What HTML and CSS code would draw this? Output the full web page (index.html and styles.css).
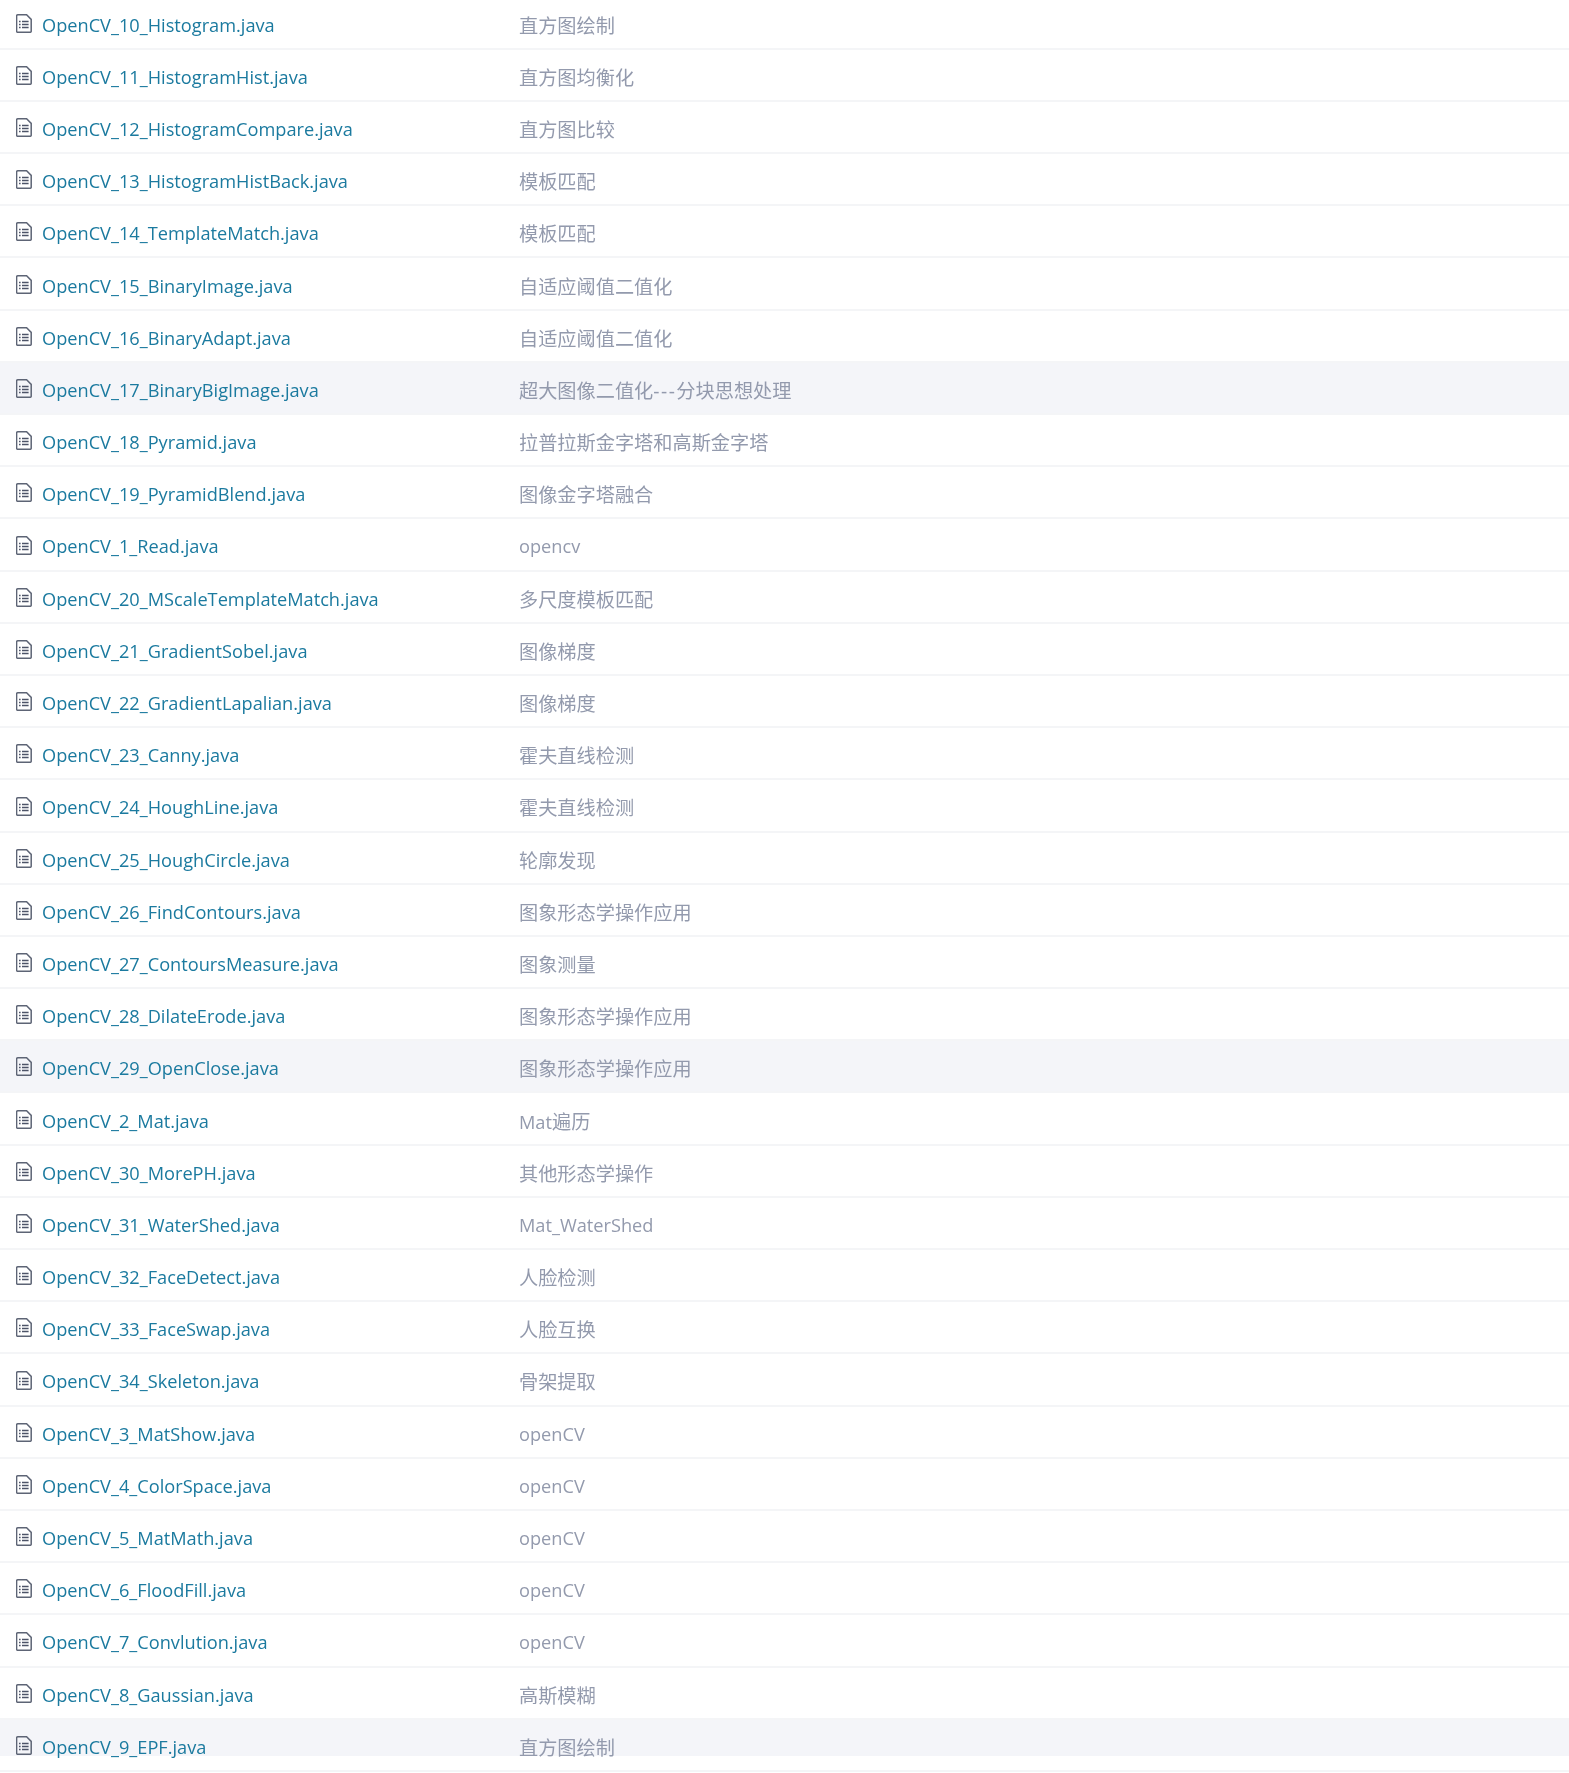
FILE: index.html
```html
<!DOCTYPE html>
<html lang="zh">
<head>
<meta charset="utf-8">
<title>OpenCV files</title>
<link rel="stylesheet" href="styles.css">
</head>
<body>
<svg class="defs" width="0" height="0" aria-hidden="true"><symbol id="file" viewBox="0 0 16 19"><path class="doc" d="M1.7 .8H10.6L15.2 5.4V17.2A1.1 1.1 0 0 1 14.1 18.3H1.7A1.1 1.1 0 0 1 .6 17.2V1.9A1.1 1.1 0 0 1 1.7 .8Z"/><path class="lines" d="M6 7.5H12.6M6 10.5H12.6M6 13.5H12.6M3 7.5H4.6M3 10.5H4.6M3 13.5H4.6"/></symbol></svg>
<main class="list">
<div class="row"><span class="name"><svg class="icon"><use href="#file"/></svg><a href="#">OpenCV_10_Histogram.java</a></span><span class="desc zh">直方图绘制</span></div>
<div class="row"><span class="name"><svg class="icon"><use href="#file"/></svg><a href="#">OpenCV_11_HistogramHist.java</a></span><span class="desc zh">直方图均衡化</span></div>
<div class="row"><span class="name"><svg class="icon"><use href="#file"/></svg><a href="#">OpenCV_12_HistogramCompare.java</a></span><span class="desc zh">直方图比较</span></div>
<div class="row"><span class="name"><svg class="icon"><use href="#file"/></svg><a href="#">OpenCV_13_HistogramHistBack.java</a></span><span class="desc zh">模板匹配</span></div>
<div class="row"><span class="name"><svg class="icon"><use href="#file"/></svg><a href="#">OpenCV_14_TemplateMatch.java</a></span><span class="desc zh">模板匹配</span></div>
<div class="row"><span class="name"><svg class="icon"><use href="#file"/></svg><a href="#">OpenCV_15_BinaryImage.java</a></span><span class="desc zh">自适应阈值二值化</span></div>
<div class="row"><span class="name"><svg class="icon"><use href="#file"/></svg><a href="#">OpenCV_16_BinaryAdapt.java</a></span><span class="desc zh">自适应阈值二值化</span></div>
<div class="row hover"><span class="name"><svg class="icon"><use href="#file"/></svg><a href="#">OpenCV_17_BinaryBigImage.java</a></span><span class="desc zh">超大图像二值化<span class="dash">---</span>分块思想处理</span></div>
<div class="row"><span class="name"><svg class="icon"><use href="#file"/></svg><a href="#">OpenCV_18_Pyramid.java</a></span><span class="desc zh">拉普拉斯金字塔和高斯金字塔</span></div>
<div class="row"><span class="name"><svg class="icon"><use href="#file"/></svg><a href="#">OpenCV_19_PyramidBlend.java</a></span><span class="desc zh">图像金字塔融合</span></div>
<div class="row"><span class="name"><svg class="icon"><use href="#file"/></svg><a href="#">OpenCV_1_Read.java</a></span><span class="desc">opencv</span></div>
<div class="row"><span class="name"><svg class="icon"><use href="#file"/></svg><a href="#">OpenCV_20_MScaleTemplateMatch.java</a></span><span class="desc zh">多尺度模板匹配</span></div>
<div class="row"><span class="name"><svg class="icon"><use href="#file"/></svg><a href="#">OpenCV_21_GradientSobel.java</a></span><span class="desc zh">图像梯度</span></div>
<div class="row"><span class="name"><svg class="icon"><use href="#file"/></svg><a href="#">OpenCV_22_GradientLapalian.java</a></span><span class="desc zh">图像梯度</span></div>
<div class="row"><span class="name"><svg class="icon"><use href="#file"/></svg><a href="#">OpenCV_23_Canny.java</a></span><span class="desc zh">霍夫直线检测</span></div>
<div class="row"><span class="name"><svg class="icon"><use href="#file"/></svg><a href="#">OpenCV_24_HoughLine.java</a></span><span class="desc zh">霍夫直线检测</span></div>
<div class="row"><span class="name"><svg class="icon"><use href="#file"/></svg><a href="#">OpenCV_25_HoughCircle.java</a></span><span class="desc zh">轮廓发现</span></div>
<div class="row"><span class="name"><svg class="icon"><use href="#file"/></svg><a href="#">OpenCV_26_FindContours.java</a></span><span class="desc zh">图象形态学操作应用</span></div>
<div class="row"><span class="name"><svg class="icon"><use href="#file"/></svg><a href="#">OpenCV_27_ContoursMeasure.java</a></span><span class="desc zh">图象测量</span></div>
<div class="row"><span class="name"><svg class="icon"><use href="#file"/></svg><a href="#">OpenCV_28_DilateErode.java</a></span><span class="desc zh">图象形态学操作应用</span></div>
<div class="row hover"><span class="name"><svg class="icon"><use href="#file"/></svg><a href="#">OpenCV_29_OpenClose.java</a></span><span class="desc zh">图象形态学操作应用</span></div>
<div class="row"><span class="name"><svg class="icon"><use href="#file"/></svg><a href="#">OpenCV_2_Mat.java</a></span><span class="desc">Mat<span class="zh">遍历</span></span></div>
<div class="row"><span class="name"><svg class="icon"><use href="#file"/></svg><a href="#">OpenCV_30_MorePH.java</a></span><span class="desc zh">其他形态学操作</span></div>
<div class="row"><span class="name"><svg class="icon"><use href="#file"/></svg><a href="#">OpenCV_31_WaterShed.java</a></span><span class="desc">Mat_WaterShed</span></div>
<div class="row"><span class="name"><svg class="icon"><use href="#file"/></svg><a href="#">OpenCV_32_FaceDetect.java</a></span><span class="desc zh">人脸检测</span></div>
<div class="row"><span class="name"><svg class="icon"><use href="#file"/></svg><a href="#">OpenCV_33_FaceSwap.java</a></span><span class="desc zh">人脸互换</span></div>
<div class="row"><span class="name"><svg class="icon"><use href="#file"/></svg><a href="#">OpenCV_34_Skeleton.java</a></span><span class="desc zh">骨架提取</span></div>
<div class="row"><span class="name"><svg class="icon"><use href="#file"/></svg><a href="#">OpenCV_3_MatShow.java</a></span><span class="desc">openCV</span></div>
<div class="row"><span class="name"><svg class="icon"><use href="#file"/></svg><a href="#">OpenCV_4_ColorSpace.java</a></span><span class="desc">openCV</span></div>
<div class="row"><span class="name"><svg class="icon"><use href="#file"/></svg><a href="#">OpenCV_5_MatMath.java</a></span><span class="desc">openCV</span></div>
<div class="row"><span class="name"><svg class="icon"><use href="#file"/></svg><a href="#">OpenCV_6_FloodFill.java</a></span><span class="desc">openCV</span></div>
<div class="row"><span class="name"><svg class="icon"><use href="#file"/></svg><a href="#">OpenCV_7_Convlution.java</a></span><span class="desc">openCV</span></div>
<div class="row"><span class="name"><svg class="icon"><use href="#file"/></svg><a href="#">OpenCV_8_Gaussian.java</a></span><span class="desc zh">高斯模糊</span></div>
<div class="row hover cut"><span class="name"><svg class="icon"><use href="#file"/></svg><a href="#">OpenCV_9_EPF.java</a></span><span class="desc zh">直方图绘制</span></div>
</main>
</body>
</html>
```
FILE: styles.css
```css
html, body { margin: 0; padding: 0; background: #fff; overflow: hidden; }
.defs { display: block; height: 0; }
.list {
  display: grid;
  grid-auto-rows: 52.2px;
  margin-top: -2.5px;
  font-family: "Open Sans", "Noto Sans CJK SC", sans-serif;
  font-size: 18.2px;
  filter: blur(0.35px);
}
.row {
  display: grid;
  grid-template-columns: 519px 1fr;
  align-items: center;
  border-bottom: 2px solid #f4f5f7;
  box-sizing: border-box;
  padding-top: 4px;
}
.hover { background: #f4f5f9; }
.cut { background: linear-gradient(#f4f5f9 36px, #fff 36px); }
.name { display: flex; align-items: center; padding-left: 16px; }
.icon { width: 16px; height: 19px; margin-right: 10px; flex: none; position: relative; top: -1.4px; }
.doc { fill: none; stroke: #5d6475; stroke-width: 1.5; }
.lines { fill: none; stroke: #4d5468; stroke-width: 1.6; }
a { color: #1b7a9f; text-decoration: none; }
.desc { color: #939aad; }
.zh { font-size: 19.2px; }
.dash { font-size: 19.2px; letter-spacing: 1.5px; }
```
